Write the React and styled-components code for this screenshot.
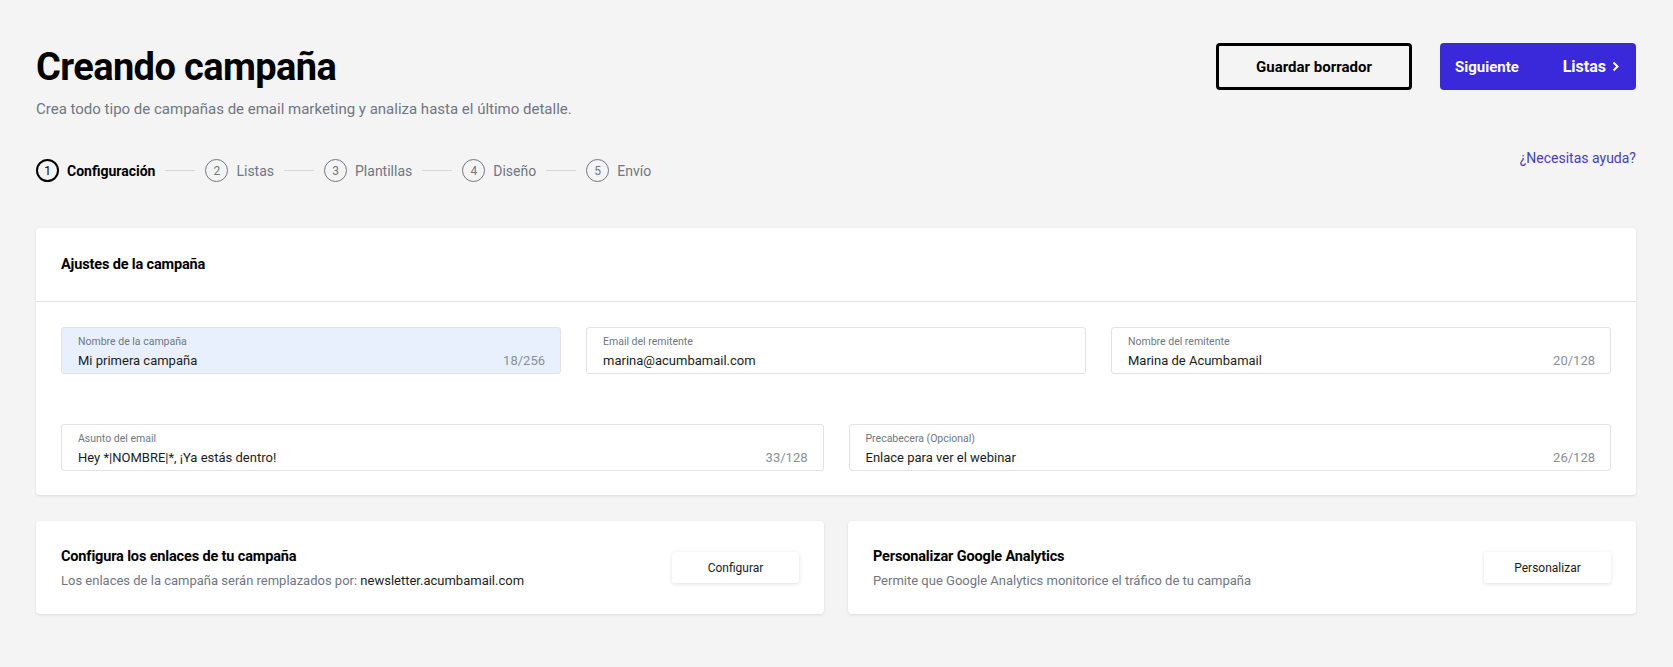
import React from 'react';
import styled, { createGlobalStyle } from 'styled-components';

const colors = {
  bg: '#f4f4f4',
  white: '#ffffff',
  black: '#000000',
  text: '#1c1c1c',
  grey: '#6f7782',
  lightGrey: '#8a9099',
  border: '#e3e3e3',
  purple: '#3a28db',
  link: '#4a3cc2',
  autofill: '#e8f0fe',
};

const condensed = `"Liberation Sans Narrow", "Roboto", sans-serif`;
const plain = `"Roboto", "Liberation Sans", sans-serif`;

const GlobalStyle = createGlobalStyle`
  body {
    margin: 0;
    background: ${colors.bg};
    font-family: ${plain};
    color: ${colors.text};
  }
`;

const Page = styled.div`
  padding: 43px 37px 40px 36px;
`;

const Header = styled.div`
  display: flex;
  justify-content: space-between;
  align-items: flex-start;
`;

const Title = styled.h1`
  margin: 0;
  font-family: ${condensed};
  font-weight: 700;
  font-size: 38px;
  line-height: 48px;
  color: ${colors.black};
  letter-spacing: -0.6px;
`;

const Subtitle = styled.p`
  margin: 8px 0 0;
  font-size: 15px;
  line-height: 20px;
  color: ${colors.grey};
`;

const Actions = styled.div`
  display: flex;
  gap: 28px;
`;

const DraftBtn = styled.button`
  width: 196px;
  height: 47px;
  background: transparent;
  border: 3px solid ${colors.black};
  border-radius: 4px;
  font-family: ${condensed};
  font-weight: 700;
  font-size: 15px;
  color: ${colors.black};
  cursor: pointer;
`;

const NextBtn = styled.button`
  width: 196px;
  height: 47px;
  display: flex;
  align-items: center;
  justify-content: space-between;
  padding: 0 17px 0 15px;
  background: ${colors.purple};
  border: none;
  border-radius: 4px;
  font-family: ${condensed};
  font-weight: 700;
  font-size: 15px;
  color: ${colors.white};
  cursor: pointer;
`;

const NextStep = styled.span`
  display: flex;
  align-items: center;
  gap: 6px;
  font-size: 16px;
`;

const StepsRow = styled.div`
  display: flex;
  justify-content: space-between;
  align-items: flex-start;
  margin-top: 40px;
`;

const Steps = styled.ol`
  display: flex;
  align-items: center;
  margin: 0;
  padding: 0;
  list-style: none;
`;

const Step = styled.li`
  display: flex;
  align-items: center;
  gap: 8px;
  font-family: ${condensed};
  font-size: 14px;
  font-weight: ${({ active }) => (active ? 700 : 400)};
  color: ${({ active }) => (active ? colors.black : colors.grey)};
`;

const StepNum = styled.span`
  width: 23px;
  height: 23px;
  border-radius: 50%;
  border: ${({ active }) => (active ? `2px solid ${colors.black}` : `1px solid ${colors.grey}`)};
  box-sizing: border-box;
  display: flex;
  align-items: center;
  justify-content: center;
  font-family: ${plain};
  font-weight: 400;
  font-size: 12px;
  color: ${({ active }) => (active ? colors.black : colors.grey)};
`;

const StepLine = styled.span`
  width: 30px;
  height: 1px;
  margin: 0 10px;
  background: #d8d8d8;
`;

const HelpLink = styled.a`
  margin-top: -9px;
  font-family: ${condensed};
  font-size: 14px;
  color: ${colors.link};
  text-decoration: none;
`;

const Card = styled.section`
  background: ${colors.white};
  border-radius: 4px;
  box-shadow: 0 1px 3px rgba(0, 0, 0, 0.1);
`;

const SettingsCard = styled(Card)`
  margin-top: 46px;
`;

const CardHeader = styled.div`
  height: 73px;
  display: flex;
  align-items: center;
  padding: 0 25px;
  border-bottom: 1px solid ${colors.border};
`;

const CardTitle = styled.h2`
  margin: 0;
  font-family: ${condensed};
  font-weight: 700;
  font-size: 14.5px;
  letter-spacing: -0.15px;
  color: ${colors.black};
`;

const CardBody = styled.div`
  padding: 25px 25px 24px;
  display: flex;
  flex-direction: column;
  gap: 50px;
`;

const FieldRow = styled.div`
  display: grid;
  grid-template-columns: repeat(${({ cols }) => cols}, 1fr);
  gap: 25px;
`;

const Field = styled.label`
  height: 47px;
  box-sizing: border-box;
  padding: 8px 15px 0 16px;
  border: 1px solid ${colors.border};
  border-radius: 3px;
  background: ${({ filled }) => (filled ? colors.autofill : colors.white)};
  display: flex;
  flex-direction: column;
`;

const FieldLabel = styled.span`
  font-size: 10.5px;
  line-height: 12px;
  color: ${colors.grey};
`;

const FieldLine = styled.span`
  display: flex;
  justify-content: space-between;
  margin-top: 4px;
  font-size: 13px;
  line-height: 17px;
`;

const FieldValue = styled.span`
  color: ${colors.text};
`;

const Counter = styled.span`
  color: ${colors.lightGrey};
`;

const OptionsGrid = styled.div`
  display: grid;
  grid-template-columns: 1fr 1fr;
  gap: 24px;
  margin-top: 26px;
`;

const OptionCard = styled(Card)`
  height: 93px;
  box-sizing: border-box;
  padding: 0 25px;
  display: flex;
  align-items: center;
  justify-content: space-between;
`;

const OptionText = styled.div`
  display: flex;
  flex-direction: column;
  gap: 8px;
`;

const OptionDesc = styled.p`
  margin: 0;
  font-size: 13px;
  color: ${colors.grey};
  strong {
    font-weight: 400;
    color: ${colors.text};
  }
`;

const SmallBtn = styled.button`
  width: 127px;
  height: 31px;
  background: ${colors.white};
  border: none;
  border-radius: 3px;
  box-shadow: 0 1px 4px rgba(0, 0, 0, 0.12);
  font-family: ${condensed};
  font-size: 12px;
  color: ${colors.text};
  cursor: pointer;
`;

const steps = ['Configuración', 'Listas', 'Plantillas', 'Diseño', 'Envío'];

const Chevron = () => (
  <svg width="7" height="11" viewBox="0 0 7 11" fill="none">
    <path d="M1.5 1.5L5.5 5.5L1.5 9.5" stroke="#fff" strokeWidth="2" />
  </svg>
);

const App = () => (
  <Page>
    <GlobalStyle />
    <Header>
      <div>
        <Title>Creando campaña</Title>
        <Subtitle>Crea todo tipo de campañas de email marketing y analiza hasta el último detalle.</Subtitle>
      </div>
      <Actions>
        <DraftBtn>Guardar borrador</DraftBtn>
        <NextBtn>
          <span>Siguiente</span>
          <NextStep>Listas <Chevron /></NextStep>
        </NextBtn>
      </Actions>
    </Header>

    <StepsRow>
      <Steps>
        {steps.map((s, i) => (
          <React.Fragment key={s}>
            {i > 0 && <StepLine />}
            <Step active={i === 0}>
              <StepNum active={i === 0}>{i + 1}</StepNum>
              {s}
            </Step>
          </React.Fragment>
        ))}
      </Steps>
      <HelpLink href="#">¿Necesitas ayuda?</HelpLink>
    </StepsRow>

    <SettingsCard>
      <CardHeader>
        <CardTitle>Ajustes de la campaña</CardTitle>
      </CardHeader>
      <CardBody>
        <FieldRow cols={3}>
          <Field filled>
            <FieldLabel>Nombre de la campaña</FieldLabel>
            <FieldLine>
              <FieldValue>Mi primera campaña</FieldValue>
              <Counter>18/256</Counter>
            </FieldLine>
          </Field>
          <Field>
            <FieldLabel>Email del remitente</FieldLabel>
            <FieldLine>
              <FieldValue>marina@acumbamail.com</FieldValue>
            </FieldLine>
          </Field>
          <Field>
            <FieldLabel>Nombre del remitente</FieldLabel>
            <FieldLine>
              <FieldValue>Marina de Acumbamail</FieldValue>
              <Counter>20/128</Counter>
            </FieldLine>
          </Field>
        </FieldRow>
        <FieldRow cols={2}>
          <Field>
            <FieldLabel>Asunto del email</FieldLabel>
            <FieldLine>
              <FieldValue>Hey *|NOMBRE|*, ¡Ya estás dentro!</FieldValue>
              <Counter>33/128</Counter>
            </FieldLine>
          </Field>
          <Field>
            <FieldLabel>Precabecera (Opcional)</FieldLabel>
            <FieldLine>
              <FieldValue>Enlace para ver el webinar</FieldValue>
              <Counter>26/128</Counter>
            </FieldLine>
          </Field>
        </FieldRow>
      </CardBody>
    </SettingsCard>

    <OptionsGrid>
      <OptionCard>
        <OptionText>
          <CardTitle>Configura los enlaces de tu campaña</CardTitle>
          <OptionDesc>
            Los enlaces de la campaña serán remplazados por: <strong>newsletter.acumbamail.com</strong>
          </OptionDesc>
        </OptionText>
        <SmallBtn>Configurar</SmallBtn>
      </OptionCard>
      <OptionCard>
        <OptionText>
          <CardTitle>Personalizar Google Analytics</CardTitle>
          <OptionDesc>Permite que Google Analytics monitorice el tráfico de tu campaña</OptionDesc>
        </OptionText>
        <SmallBtn>Personalizar</SmallBtn>
      </OptionCard>
    </OptionsGrid>
  </Page>
);

export default App;
